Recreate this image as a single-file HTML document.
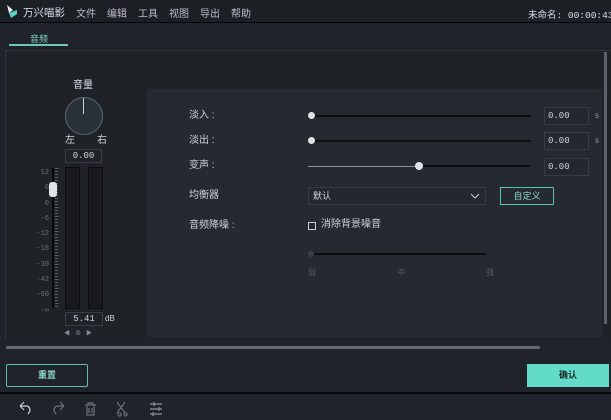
<!DOCTYPE html>
<html><head><meta charset="utf-8"><style>
*{margin:0;padding:0;box-sizing:border-box}
body{width:611px;height:420px;overflow:hidden;background:#20242a;font-family:"Liberation Sans","Noto Sans CJK SC",sans-serif;color:#cfd3d8;position:relative;font-size:10px}
.a{position:absolute}
.mono{font-family:"Liberation Mono","Noto Sans CJK SC",monospace}
.box{border:1px solid #363c44;background:#1f2328}
.m{position:absolute;top:5px;font-size:10px;color:#bbc}
</style></head><body>
<!-- top bar -->
<div class="a" style="left:0;top:0;width:611px;height:23px;background:#1c1f24;border-bottom:1px solid #050607"></div>
<svg class="a" style="left:6px;top:5px" width="12" height="13" viewBox="0 0 12 13"><path d="M1 0 L7 5 L3 8 Z" fill="#eef"/><path d="M3 8 L11 5 L11 9 L5 13 Z" fill="#55d6c2"/></svg>
<div class="a" style="left:23px;top:5px;font-size:10.5px;color:#dde">万兴喵影</div>
<div class="m" style="left:76px">文件</div>
<div class="m" style="left:107px">编辑</div>
<div class="m" style="left:138px">工具</div>
<div class="m" style="left:169px">视图</div>
<div class="m" style="left:200px">导出</div>
<div class="m" style="left:231px">帮助</div>
<div class="a mono" style="left:528px;top:7px;font-size:9.5px;color:#dde;white-space:nowrap">未命名: 00:00:43</div>
<!-- tab -->
<div class="a" style="left:30px;top:32px;font-size:9px;color:#7fd0c4">音频</div>
<div class="a" style="left:9px;top:44px;width:59px;height:2px;background:#6ec9bb"></div>
<!-- panel -->
<div class="a" style="left:5px;top:50px;width:606px;height:290px;border-top:1px solid #30363d;border-left:1px solid #30363d;background:#1f2328"></div>
<div class="a" style="left:147px;top:89px;width:455px;height:248px;background:#252a30"></div>
<div class="a" style="left:604px;top:52px;width:3px;height:272px;background:#5a616b"></div>
<!-- left volume -->
<div class="a" style="left:73px;top:76px;font-size:10px;color:#dde">音量</div>
<div class="a" style="left:65px;top:97px;width:38px;height:38px;border-radius:50%;border:1px solid #5c6670;background:#2a3038"></div>
<div class="a" style="left:83px;top:98px;width:1px;height:16px;background:#c8ccd0"></div>
<div class="a" style="left:65px;top:131px;font-size:10px">左</div>
<div class="a" style="left:97px;top:131px;font-size:10px">右</div>
<div class="a box mono" style="left:65px;top:149px;width:37px;height:14px;font-size:9px;text-align:center;line-height:13px">0.00</div>
<div class="a mono" style="left:24px;top:166px;width:25px;font-size:7px;color:#6a7078;text-align:right;line-height:15.3px;white-space:nowrap">12<br>6<br>0<br>-6<br>-12<br>-18<br>-30<br>-42<br>-60<br>-∞</div>
<div class="a" style="left:52px;top:168px;width:2px;height:140px;background:#08090a"></div>
<div class="a" style="left:55px;top:168px;width:3px;height:140px;background:repeating-linear-gradient(#555b63 0 1px,transparent 1px 3px)"></div>
<div class="a" style="left:49px;top:182px;width:8px;height:15px;border-radius:3px;background:#dfe3e6"></div>
<div class="a" style="left:65px;top:167px;width:15px;height:142px;background:#17191c;border:1px solid #0c0d0f"></div>
<div class="a" style="left:88px;top:167px;width:15px;height:142px;background:#17191c;border:1px solid #0c0d0f"></div>
<div class="a box mono" style="left:65px;top:312px;width:38px;height:14px;font-size:9px;text-align:center;line-height:13px">5.41</div>
<div class="a" style="left:105px;top:314px;font-size:8px">dB</div>
<div class="a" style="left:64px;top:328px;font-size:6px;color:#889">◀&nbsp;&nbsp;&nbsp;⊗&nbsp;&nbsp;&nbsp;▶</div>
<!-- right controls -->
<div class="a" style="left:189px;top:110px;font-size:10px;line-height:12px">淡入 :</div>
<div class="a" style="left:189px;top:135px;font-size:10px;line-height:12px">淡出 :</div>
<div class="a" style="left:189px;top:160px;font-size:10px;line-height:12px">变声 :</div>
<div class="a" style="left:189px;top:190px;font-size:10px;line-height:12px">均衡器</div>
<div class="a" style="left:189px;top:220px;font-size:10px;line-height:12px">音频降噪 :</div>
<div class="a" style="left:308px;top:115px;width:223px;height:2px;background:#0d0f11"></div>
<div class="a" style="left:308px;top:112px;width:7px;height:7px;border-radius:50%;background:#dfe3e6"></div>
<div class="a" style="left:308px;top:140px;width:223px;height:2px;background:#0d0f11"></div>
<div class="a" style="left:308px;top:137px;width:7px;height:7px;border-radius:50%;background:#dfe3e6"></div>
<div class="a" style="left:308px;top:166px;width:111px;height:1px;background:#8a9098"></div>
<div class="a" style="left:419px;top:165px;width:112px;height:2px;background:#0d0f11"></div>
<div class="a" style="left:415px;top:162px;width:8px;height:8px;border-radius:50%;background:#dfe3e6"></div>
<div class="a box mono" style="left:544px;top:107px;width:45px;height:18px;font-size:9px;line-height:17px;padding-left:3px;background:#23282e">0.00</div>
<div class="a box mono" style="left:544px;top:132px;width:45px;height:18px;font-size:9px;line-height:17px;padding-left:3px;background:#23282e">0.00</div>
<div class="a box mono" style="left:544px;top:158px;width:45px;height:18px;font-size:9px;line-height:17px;padding-left:3px;background:#23282e">0.00</div>
<div class="a" style="left:595px;top:111px;font-size:8px;color:#99a">s</div>
<div class="a" style="left:595px;top:136px;font-size:8px;color:#99a">s</div>
<div class="a" style="left:308px;top:187px;width:178px;height:18px;border:1px solid #363c44;background:#23282e;font-size:9px;line-height:17px;padding-left:4px">默认</div>
<svg class="a" style="left:470px;top:193px" width="10" height="6"><path d="M1 1 L5 5 L9 1" stroke="#ccd" fill="none"/></svg>
<div class="a" style="left:500px;top:187px;width:54px;height:18px;border:1px solid #5cbfb1;font-size:9px;line-height:16px;text-align:center;color:#8cd6cb">自定义</div>
<div class="a" style="left:308px;top:222px;width:8px;height:8px;border:1px solid #ccd"></div>
<div class="a" style="left:321px;top:219px;font-size:10px;line-height:12px">消除背景噪音</div>
<div class="a" style="left:308px;top:253px;width:178px;height:2px;background:#0d0f11"></div>
<div class="a" style="left:308px;top:251px;width:6px;height:6px;border-radius:50%;background:#3a3f46"></div>
<div class="a" style="left:308px;top:267px;font-size:8px;color:#555b63">弱</div>
<div class="a" style="left:397px;top:267px;font-size:8px;color:#555b63">中</div>
<div class="a" style="left:486px;top:267px;font-size:8px;color:#555b63">强</div>
<!-- h scrollbar -->
<div class="a" style="left:6px;top:346px;width:534px;height:3px;background:#616873;border-radius:1px"></div>
<!-- buttons -->
<div class="a" style="left:6px;top:364px;width:82px;height:23px;border:1px solid #5cbfb1;border-radius:2px;font-size:9px;line-height:21px;text-align:center;color:#8cd6cb;font-weight:bold">重置</div>
<div class="a" style="left:527px;top:364px;width:82px;height:23px;background:#62dcc9;font-size:9px;line-height:23px;text-align:center;color:#1a2a2a;font-weight:bold">确认</div>
<!-- bottom toolbar -->
<div class="a" style="left:0;top:392px;width:611px;height:28px;background:#1f242a;border-top:2px solid #050607"></div>
<svg class="a" style="left:16px;top:401px" width="150" height="16" viewBox="0 0 150 16" fill="none" stroke-width="1.2">
<path d="M4 5 L8 1 M4 5 L8 9 M4 5 H10 Q14 5 14 10 L12 13" stroke="#c8ccd0"/>
<path d="M48 5 L44 1 M48 5 L44 9 M48 5 H42 Q38 5 38 10 L40 13" stroke="#6a7078"/>
<path d="M69 4 H80 M72 4 V2 H77 V4 M71 5 V14 H78 V5 M73 7 V12 M76 7 V12" stroke="#6a7078"/>
<path d="M101 1 L109 12 M109 1 L101 12 M102 13.5 A1.5 1.5 0 1 0 102 13.4 M108 13.5 A1.5 1.5 0 1 0 108 13.4" stroke="#6a7078"/>
<path d="M134 3 H146 M134 8 H146 M134 13 H146 M138 1 V5 M143 6 V10 M137 11 V15" stroke="#8a9098"/>
</svg>
</body></html>
